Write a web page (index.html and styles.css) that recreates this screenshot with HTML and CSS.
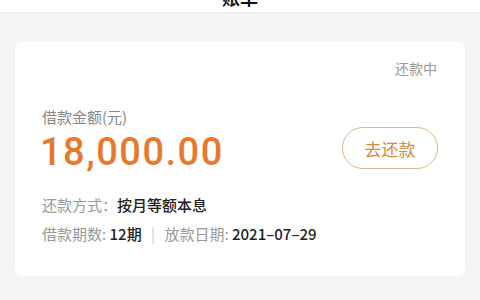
FILE: index.html
```html
<!DOCTYPE html>
<html>

<head>
    <meta charset="utf-8" />
    <title>账单</title>
    <meta name="viewport" content="width=device-width, initial-scale=1">
    <link rel="stylesheet" href="styles.css">
</head>

<body>
    <div class="topbar">
        <div class="topbar-title">账单</div>
    </div>

    <div class="page">
        <div class="loan-card">
            <div class="loan-status">还款中</div>

            <div class="loan-main">
                <div>
                    <div class="loan-label">借款金额(元)</div>
                    <div class="loan-amount">18,000.00</div>
                </div>
                <button class="repay-btn">去还款</button>
            </div>

            <div class="loan-row">
                <span class="key">还款方式：</span><span class="val">按月等额本息</span>
            </div>
            <div class="loan-row">
                <span class="key">借款期数:</span>
                <span class="val">12期</span>
                <span class="sep">|</span>
                <span class="key">放款日期:</span>
                <span class="val">2021–07–29</span>
            </div>
        </div>
    </div>
</body>

</html>
```

FILE: styles.css
```css
body {
    margin: 0;
    background: #f5f5f5;
    font-family: "Noto Sans CJK SC", "Noto Sans", sans-serif;
}

.topbar {
    height: 12px;
    overflow: hidden;
    background: #fff;
    border-bottom: 1px solid #eeeeee;
    display: flex;
    justify-content: center;
    align-items: flex-end;
}

.topbar-title {
    font-size: 18px;
    font-weight: bold;
    line-height: 22px;
    padding-bottom: 4px;
    color: #111;
}

.page {
    padding: 29px 15px 0;
}

.loan-card {
    background: #fff;
    border-radius: 6px;
    box-shadow: 0 0 3px rgba(0, 0, 0, 0.04);
    padding: 16px 27px 32px 25px;
}

.loan-status {
    text-align: right;
    font-size: 14px;
    line-height: 20px;
    color: #999;
    padding-right: 1px;
}

.loan-main {
    display: flex;
    justify-content: space-between;
    align-items: center;
    margin-top: 29px;
}

.loan-label {
    font-size: 15px;
    line-height: 20px;
    color: #888;
    padding-left: 2px;
}

.loan-amount {
    font-family: Roboto, "Liberation Sans", sans-serif;
    font-weight: 500;
    font-size: 38px;
    line-height: 46px;
    letter-spacing: 1.5px;
    color: #e8782c;
    padding-top: 2px;
}

.repay-btn {
    width: 96px;
    height: 42px;
    margin-top: 14px;
    border: 1px solid #d9b68e;
    border-radius: 21px;
    background: #fff;
    color: #d98a3a;
    font-family: "Noto Sans CJK SC", sans-serif;
    font-size: 17px;
    padding: 0;
}

.loan-row {
    font-size: 15px;
    line-height: 20px;
    color: #999;
    padding-left: 2px;
    margin-top: 9px;
}

.loan-main + .loan-row {
    margin-top: 20px;
}

.loan-row .val {
    color: #222;
    font-weight: 500;
}

.loan-row .sep {
    color: #ccc;
    margin: 0 6px;
}
```
